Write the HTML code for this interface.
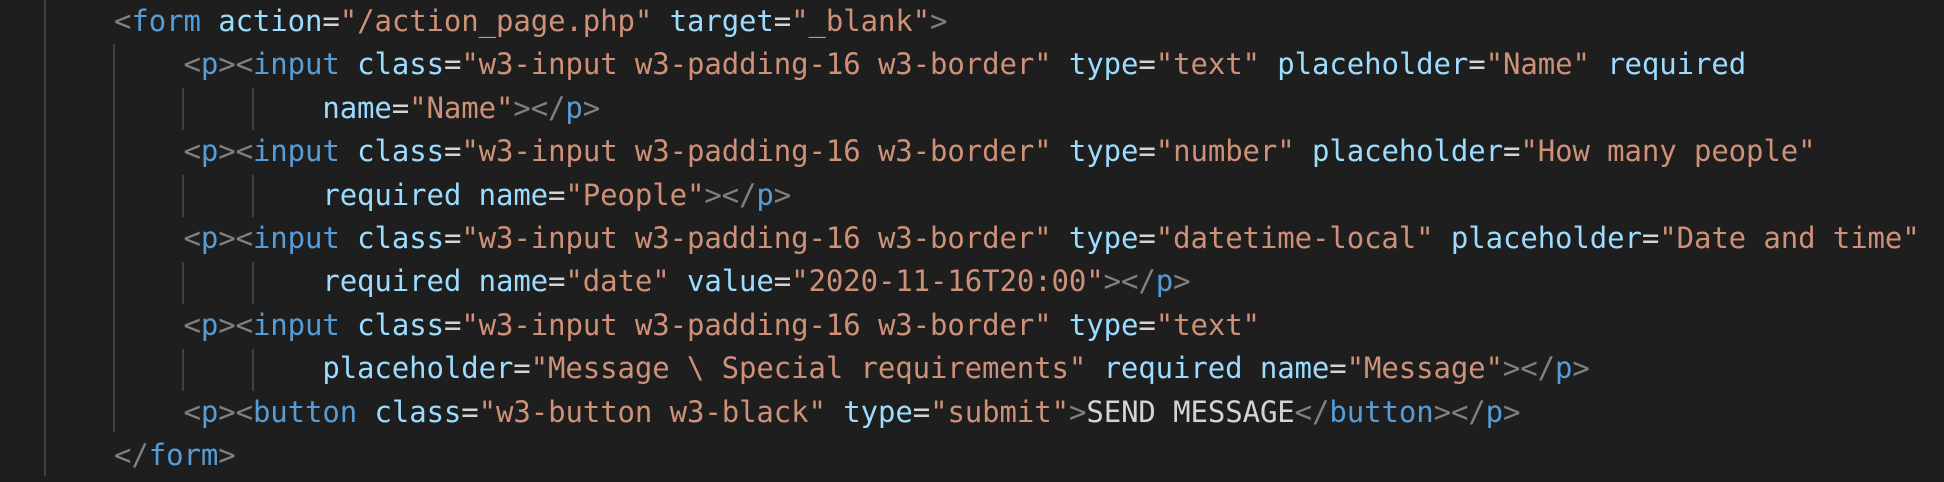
<!DOCTYPE html>
<html><head><style>
html,body{margin:0;padding:0;background:#1e1e1e;width:1944px;height:482px;overflow:hidden;}
.l{position:absolute;left:114px;height:43.4px;line-height:43.4px;font-family:"DejaVu Sans Mono","Liberation Mono",monospace;font-size:29px;white-space:pre;color:#d4d4d4;letter-spacing:-0.1px}
.g{position:absolute;width:2px;background:#404040}
.p{color:#808080}.t{color:#569cd6}.a{color:#9cdcfe}.s{color:#ce9178}
</style></head><body>
<div class="g" style="left:44px;top:0;height:476px"></div>
<div class="g" style="left:113px;top:44px;height:388px"></div>
<div class="g" style="left:182px;top:88px;height:42px"></div>
<div class="g" style="left:252px;top:88px;height:42px"></div>
<div class="g" style="left:182px;top:175px;height:42px"></div>
<div class="g" style="left:252px;top:175px;height:42px"></div>
<div class="g" style="left:182px;top:262px;height:42px"></div>
<div class="g" style="left:252px;top:262px;height:42px"></div>
<div class="g" style="left:182px;top:349px;height:42px"></div>
<div class="g" style="left:252px;top:349px;height:42px"></div>
<div class="l" style="top:0px"><span class="p">&lt;</span><span class="t">form</span> <span class="a">action</span>=<span class="s">"/action_page.php"</span> <span class="a">target</span>=<span class="s">"_blank"</span><span class="p">&gt;</span></div>
<div class="l" style="top:43.4px">    <span class="p">&lt;</span><span class="t">p</span><span class="p">&gt;&lt;</span><span class="t">input</span> <span class="a">class</span>=<span class="s">"w3-input w3-padding-16 w3-border"</span> <span class="a">type</span>=<span class="s">"text"</span> <span class="a">placeholder</span>=<span class="s">"Name"</span> <span class="a">required</span></div>
<div class="l" style="top:86.8px">            <span class="a">name</span>=<span class="s">"Name"</span><span class="p">&gt;&lt;/</span><span class="t">p</span><span class="p">&gt;</span></div>
<div class="l" style="top:130.2px">    <span class="p">&lt;</span><span class="t">p</span><span class="p">&gt;&lt;</span><span class="t">input</span> <span class="a">class</span>=<span class="s">"w3-input w3-padding-16 w3-border"</span> <span class="a">type</span>=<span class="s">"number"</span> <span class="a">placeholder</span>=<span class="s">"How many people"</span></div>
<div class="l" style="top:173.6px">            <span class="a">required</span> <span class="a">name</span>=<span class="s">"People"</span><span class="p">&gt;&lt;/</span><span class="t">p</span><span class="p">&gt;</span></div>
<div class="l" style="top:217px">    <span class="p">&lt;</span><span class="t">p</span><span class="p">&gt;&lt;</span><span class="t">input</span> <span class="a">class</span>=<span class="s">"w3-input w3-padding-16 w3-border"</span> <span class="a">type</span>=<span class="s">"datetime-local"</span> <span class="a">placeholder</span>=<span class="s">"Date and time"</span></div>
<div class="l" style="top:260.4px">            <span class="a">required</span> <span class="a">name</span>=<span class="s">"date"</span> <span class="a">value</span>=<span class="s">"2020-11-16T20:00"</span><span class="p">&gt;&lt;/</span><span class="t">p</span><span class="p">&gt;</span></div>
<div class="l" style="top:303.8px">    <span class="p">&lt;</span><span class="t">p</span><span class="p">&gt;&lt;</span><span class="t">input</span> <span class="a">class</span>=<span class="s">"w3-input w3-padding-16 w3-border"</span> <span class="a">type</span>=<span class="s">"text"</span></div>
<div class="l" style="top:347.2px">            <span class="a">placeholder</span>=<span class="s">"Message \ Special requirements"</span> <span class="a">required</span> <span class="a">name</span>=<span class="s">"Message"</span><span class="p">&gt;&lt;/</span><span class="t">p</span><span class="p">&gt;</span></div>
<div class="l" style="top:390.6px">    <span class="p">&lt;</span><span class="t">p</span><span class="p">&gt;&lt;</span><span class="t">button</span> <span class="a">class</span>=<span class="s">"w3-button w3-black"</span> <span class="a">type</span>=<span class="s">"submit"</span><span class="p">&gt;</span>SEND MESSAGE<span class="p">&lt;/</span><span class="t">button</span><span class="p">&gt;&lt;/</span><span class="t">p</span><span class="p">&gt;</span></div>
<div class="l" style="top:434px"><span class="p">&lt;/</span><span class="t">form</span><span class="p">&gt;</span></div>
</body></html>
